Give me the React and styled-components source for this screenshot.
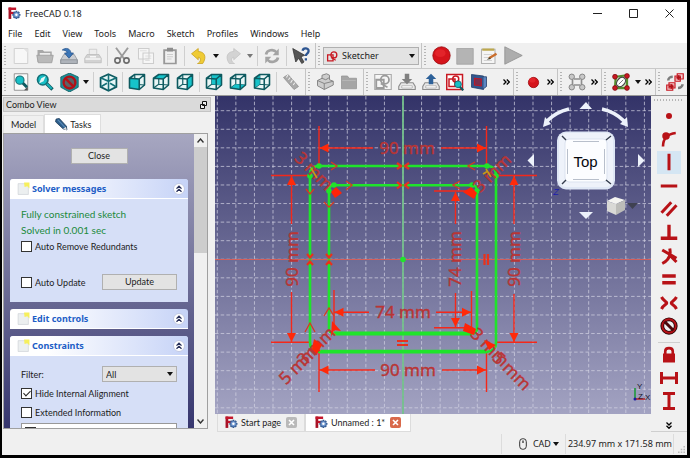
import React from "react";
import styled, { createGlobalStyle } from "styled-components";

const GRID = 18.57;
const vLines = Array.from({ length: 24 }, (_, i) => 217.3 + i * GRID);
const hLines = Array.from({ length: 17 }, (_, i) => 110.7 + i * GRID);

/* ---------- icons ---------- */

const Icon = ({ size = 18, children }) => (
  <svg width={size} height={size} viewBox="0 0 24 24" fill="none" aria-hidden="true">
    {children}
  </svg>
);

const Caret = ({ color = "#111" }) => (
  <svg width="6" height="4" viewBox="0 0 6 4" aria-hidden="true">
    <path d="M0 0h6L3 4z" fill={color} />
  </svg>
);

const Chevrons = () => (
  <svg width="7" height="6" viewBox="0 0 7 6" fill="none" aria-hidden="true">
    <path d="M0.5 0.5L3 3L0.5 5.5M3.8 0.5L6.3 3L3.8 5.5" stroke="#000" strokeWidth="1.3" />
  </svg>
);

const Logo = ({ size = 13 }) => (
  <Icon size={size}>
    <rect x="1" y="1" width="5" height="21" fill="#a81226" />
    <rect x="1" y="1" width="14" height="4.500" fill="#c3152b" />
    <rect x="5" y="9" width="7" height="4" fill="#c3152b" />
    <g stroke="#34598f" strokeWidth="3.400">
      <path d="M15.500 7v15M8 14.500h15M10.200 9.200l10.600 10.600M20.800 9.200L10.200 19.800" />
    </g>
    <circle cx="15.500" cy="14.500" r="5.400" fill="#7098d0" stroke="#34598f" />
    <circle cx="15.500" cy="14.500" r="2.300" fill="#fff" />
  </Icon>
);

const faces = {
  front: "M2 7L15 8V22L2 20Z",
  top: "M2 7L9 2H22L15 8Z",
  right: "M15 8L22 2V16L15 22Z",
  rear: "M9 2H22V16L9 15Z",
  bottom: "M2 20L9 15L22 16L15 22Z",
  left: "M2 7L9 2V15L2 20Z",
};

const CubeIcon = ({ face }) => (
  <Icon>
    <path d="M2 7L9 2H22V16L15 22L2 20Z" fill="#e9f6f6" />
    <path d="M9 2V15L2 20M9 15L22 16" stroke="#155f64" strokeWidth="1.600" />
    <path d={faces[face]} fill="#16c3ca" />
    <path d="M2 7L9 2H22V16L15 22L2 20ZM2 7L15 8V22M15 8L22 2" stroke="#0e5a60" strokeWidth="2.100" strokeLinejoin="round" />
  </Icon>
);

const IsoIcon = () => (
  <Icon size={19}>
    <path d="M12 1.500L22 6V17.500L12 22.500L2 17.500V6Z" fill="#e6f7f7" stroke="#0e5a60" strokeWidth="2.200" />
    <path d="M2 6L12 10.500L22 6M12 10.500V22M12 2V9M3 17L10 13M21 17L14 13" stroke="#137077" strokeWidth="2" />
  </Icon>
);

const NewIcon = ({ color = "#f7f7f7" }) => (
  <Icon>
    <path d="M3 2H21V22H3Z" fill={color} stroke="#d0d0d0" strokeWidth="1.300" />
    <path d="M15 2L21 8V2Z" fill="#e2e2e2" />
  </Icon>
);
const OpenIcon = () => (
  <Icon>
    <path d="M2 4H9L11 6H21V20H2Z" fill="#a8a8a8" />
    <path d="M5 8H19V15H5Z" fill="#ececec" />
    <path d="M1 11H23L21 21H3Z" fill="#b9b9b9" stroke="#999" />
  </Icon>
);
const SaveIcon = () => (
  <Icon>
    <path d="M5 10H19L23 17V22H1V17Z" fill="#c9ccd1" stroke="#8b9097" />
    <path d="M1 17H23V22H1Z" fill="#aeb3ba" stroke="#84898f" />
    <path d="M3 4C8 0 14 2 14.500 8H18L12 15L6 8H9.500C9 5 6 4 3 4Z" fill="#3b76b8" stroke="#24528a" />
  </Icon>
);
const PrintIcon = () => (
  <Icon>
    <path d="M7 3H17V11H7Z" fill="#ededed" stroke="#c6c6c6" />
    <path d="M4 10H20L23 15V21H1V15Z" fill="#d2d2d2" stroke="#bbb" />
    <path d="M2 16H22M8 13H16" stroke="#f7f7f7" strokeWidth="2" />
  </Icon>
);
const CutIcon = () => (
  <Icon>
    <path d="M4 1L15 16M20 1L9 16" stroke="#9a9a9a" strokeWidth="2.500" />
    <circle cx="6" cy="18" r="3.500" stroke="#6d6d6d" strokeWidth="2.200" />
    <circle cx="18" cy="18" r="3.500" stroke="#6d6d6d" strokeWidth="2.200" />
  </Icon>
);
const CopyIcon = () => (
  <Icon>
    <path d="M2 2H16V16H2ZM8 8H22V22H8Z" fill="#f6f6f6" stroke="#cdcdcd" strokeWidth="1.400" />
    <path d="M11 12H19M11 15H19M11 18H17M4 5H13" stroke="#d5d5d5" />
  </Icon>
);
const PasteIcon = () => (
  <Icon>
    <path d="M3 3H21V23H3Z" fill="#999" />
    <path d="M5.500 5.500H18.500V21H5.500Z" fill="#f0f0f0" />
    <path d="M8 1H16V6H8Z" fill="#8d8d8d" />
    <path d="M8 10H16M8 13H16M8 16H14" stroke="#c2c2c2" />
  </Icon>
);
const UndoIcon = ({ fill, line, flip }) => (
  <Icon>
    <g transform={flip ? "translate(24 0) scale(-1 1)" : undefined}>
      <path d="M2 9L11 2V6C19 6 23 13 17 22H10C15 20 15 14 11 13.500V17Z" fill={fill} stroke={line} />
    </g>
  </Icon>
);
const RefreshIcon = () => (
  <Icon>
    <path d="M4 10C5 4 14 2 18 7M20 14C19 20 10 22 6 17" stroke="#a4a4a4" strokeWidth="3.600" />
    <path d="M21 2V11H13ZM3 22V13H11Z" fill="#a4a4a4" />
  </Icon>
);
const HelpIcon = () => (
  <Icon>
    <path d="M1 2L5 20L9 15L13 22L16 20L12 13L17 11Z" fill="#555" stroke="#333" />
    <path d="M14 5C15 0 23 1 22 6C21.500 9 18.500 9 18.500 12M18.500 15V18" stroke="#2d5591" strokeWidth="3" />
  </Icon>
);
const SketchIcon = ({ color = "#c81822", size = 18, bg }) => (
  <Icon size={size}>
    {bg && <path d="M1 2H23V22H1Z" fill="#f6f6f6" stroke="#aaa" strokeWidth="1.500" />}
    <path d="M3 9H13V20H3Z" stroke={color} strokeWidth="2.400" />
    <circle cx="14.500" cy="9" r="5.500" stroke={color} strokeWidth="2.400" />
    <path d="M9 14L18 19" stroke={color} strokeWidth="2" />
  </Icon>
);
const RecordIcon = ({ r = 11, size = 19 }) => (
  <Icon size={size}>
    <circle cx="12" cy="12" r={r} fill="#d5141b" stroke="#9b0c10" />
    <ellipse cx="10.500" cy="9" rx={r * 0.6} ry={r * 0.45} fill="#e3242a" />
  </Icon>
);
const StopIcon = () => (
  <Icon>
    <path d="M1 2H23V23H1Z" fill="#b4b4b4" stroke="#9f9f9f" />
  </Icon>
);
const MacroEditIcon = () => (
  <Icon>
    <path d="M2 3H20V22H2Z" fill="#f5f5f5" stroke="#b1b1b1" strokeWidth="1.400" />
    <path d="M3 2H19V5H3Z" fill="#bda84e" />
    <path d="M5 10H16M5 14H12M5 18H16" stroke="#c5c5c5" />
    <path d="M22 9L12 15" stroke="#c96e2d" strokeWidth="3.200" />
    <path d="M13 13.500L9 17L14.500 16Z" fill="#443" />
  </Icon>
);
const PlayIcon = () => (
  <Icon size={19}>
    <path d="M1 1L23 12L1 23Z" fill="#adadad" stroke="#8e8e8e" />
  </Icon>
);
const FitIcon = () => (
  <Icon>
    <path d="M3 1H21V23H3Z" fill="#fafafa" stroke="#777" />
    <path d="M16 23L21 18V23Z" fill="#555" />
    <path d="M14 13L20 19" stroke="#0e5a60" strokeWidth="4" />
    <circle cx="10.500" cy="9.500" r="5.500" fill="#16bfc6" stroke="#137077" strokeWidth="1.500" />
  </Icon>
);
const ZoomIcon = () => (
  <Icon>
    <path d="M14 14L22 22" stroke="#0e5a60" strokeWidth="4.500" />
    <path d="M14 14L21 21" stroke="#16b0b8" strokeWidth="2.500" />
    <circle cx="9" cy="9" r="7" fill="#17bec5" stroke="#137077" strokeWidth="2.200" />
    <path d="M13 4L10 11L4 14L7 7Z" fill="#e3f7f7" />
  </Icon>
);
const DrawStyleIcon = () => (
  <Icon size={19}>
    <path d="M12 0L23 5V18L12 24L1 18V5Z" fill="#1a9098" stroke="#0e5a60" />
    <circle cx="12" cy="12" r="7.500" fill="#5a6468" stroke="#b01218" strokeWidth="3" />
    <path d="M6.500 6.500L17.500 17.500" stroke="#b01218" strokeWidth="3" />
  </Icon>
);
const RulerIcon = () => (
  <Icon>
    <path d="M2 6L8 2L22 18L16 22Z" fill="#a9a9a9" stroke="#8d8d8d" />
    <path d="M8 2L6 6M11 6L8.500 9M14 9L11.500 13M17 13L15 16" stroke="#f0f0f0" strokeWidth="1.400" />
  </Icon>
);
const PartIcon = () => (
  <Icon>
    <path d="M2 10L8 7V3L14 1L18 3V9L23 11V16L11 22L2 17Z" fill="#cdcdcd" stroke="#858585" strokeWidth="1.300" />
    <path d="M2 10L11 14L23 11M11 14V22M8 7L13 9L18 6" stroke="#858585" strokeWidth="1.300" />
  </Icon>
);
const FolderIcon = () => (
  <Icon>
    <path d="M2 4H10L12 7H22V21H2Z" fill="#a5a5a5" stroke="#939393" />
    <path d="M3 10H21" stroke="#bbb" />
  </Icon>
);
const TrayIcon = ({ color, up }) => (
  <Icon>
    <path d="M4 13H20L23 18V22H1V18Z" fill="#e9e9e9" stroke="#8d8d8d" strokeWidth="1.500" />
    <path d="M5 17H19V20H5Z" fill="#fff" stroke="#aaa" />
    {up ? <path d="M12 1L19 8H15V15H9V8H5Z" fill={color} /> : <path d="M12 15L5 8H9V1H15V8H19Z" fill={color} />}
  </Icon>
);
const ViewSketchIcon = () => (
  <Icon>
    <path d="M1 2H22V22H1Z" fill="#fff" stroke="#c81822" strokeWidth="2" />
    <path d="M4 8H12V18H4Z" stroke="#c81822" strokeWidth="2" />
    <circle cx="13" cy="8" r="4" stroke="#c81822" strokeWidth="2" />
    <path d="M18 18L23 23" stroke="#0e5a60" strokeWidth="3" />
    <circle cx="16" cy="15" r="4.500" fill="#17bec5" stroke="#0e5a60" />
  </Icon>
);
const SectionIcon = () => (
  <Icon>
    <path d="M2 2L18 4V22L2 19Z" fill="#31578f" stroke="#1c3763" />
    <path d="M18 5H22V18L18 21" fill="#5c86c2" stroke="#1c3763" />
    <path d="M6 7L15 8V17L6 16Z" fill="#7c2e4d" stroke="#b81a2a" strokeWidth="1.600" />
  </Icon>
);
const ArrayIcon = () => (
  <Icon>
    <path d="M6 6V18M18 6V18M8 8H16M8 16H16" stroke="#8e8e8e" strokeWidth="2.200" />
    {[[5, 5], [19, 5], [5, 19], [19, 19]].map(([x, y]) => (
      <circle key={`${x}-${y}`} cx={x} cy={y} r="3.600" fill="#c8c8c8" stroke="#858585" strokeWidth="1.300" />
    ))}
  </Icon>
);
const BsplineIcon = () => (
  <Icon>
    <path d="M5 5L20 3L20 20L4 20Z" fill="#cfe7bd" stroke="#568f2f" strokeWidth="3" />
    <ellipse cx="12" cy="12" rx="5" ry="7" transform="rotate(40 12 12)" fill="#fff" stroke="#444" strokeWidth="1.600" />
    <path d="M9 15L15 9" stroke="#555" />
    {[[4, 5], [20, 4], [20, 20], [4, 20]].map(([x, y]) => (
      <circle key={`${x}-${y}`} cx={x} cy={y} r="3.200" fill="#c81822" stroke="#7d0d12" />
    ))}
  </Icon>
);
const VirtualSpaceIcon = () => (
  <Icon>
    <path d="M3 10C3 7 6 5 9 5M22 15C22 18 19 20 16 20" stroke="#7c7c7c" strokeWidth="3.500" />
    <path d="M12 4H19V11H12ZM15 1H23V8H15ZM1 16H9V23H1ZM4 13H12V20H4Z" fill="#f2cccf" stroke="#c81822" strokeWidth="1.600" />
    <path d="M14 6H20M17 3V9M4 18H10M7 15V21" stroke="#b01218" strokeWidth="2" />
  </Icon>
);
const PencilIcon = () => (
  <Icon size={13}>
    <path d="M2 2L8 1L21 15L22 22L15 20L1 7Z" fill="#2d5e8b" stroke="#1b3a58" strokeWidth="1.500" />
    <path d="M20 16L22 23L15 20Z" fill="#ddd" />
    <path d="M5 3L18 17" stroke="#5c8db9" strokeWidth="2" />
  </Icon>
);
const NoteIcon = () => (
  <Icon size={13}>
    <path d="M2 3H21V23H2Z" fill="#eceff0" stroke="#c3c8cf" />
    <path d="M13 1H23V12L19 8L14 9Z" fill="#f6ef5c" />
  </Icon>
);
const CollapseIcon = () => (
  <svg width="12" height="12" viewBox="0 0 12 12" fill="none" aria-hidden="true">
    <circle cx="6" cy="6" r="5.500" fill="#fff" stroke="#c0c8e4" />
    <path d="M3.500 5.600L6 3.200L8.500 5.600M3.500 8.800L6 6.400L8.500 8.800" stroke="#242c58" strokeWidth="1.300" />
  </svg>
);

const red = "#b81217";
const constraints = [
  { name: "Constrain coincident", draw: <circle cx="12" cy="12" r="4" fill={red} /> },
  {
    name: "Constrain point onto object",
    draw: (
      <>
        <path d="M4 22C4 12 10 5 21 4" stroke={red} strokeWidth="3.500" />
        <circle cx="8" cy="8" r="5" fill={red} />
      </>
    ),
  },
  { name: "Constrain vertically", active: true, draw: <path d="M12 1V23" stroke={red} strokeWidth="4" /> },
  { name: "Constrain horizontally", draw: <path d="M1 12H23" stroke={red} strokeWidth="4" /> },
  { name: "Constrain parallel", draw: <path d="M2 17L15 3M9 21L22 7" stroke={red} strokeWidth="4" /> },
  { name: "Constrain perpendicular", draw: <path d="M12 1V19M1 19H23" stroke={red} strokeWidth="4.500" /> },
  {
    name: "Constrain tangent",
    draw: <path d="M3 4L22 15M13 2C15 11 11 18 3 22M12 10L22 20" stroke={red} strokeWidth="4" />,
  },
  { name: "Constrain equal", draw: <path d="M3 8H21M3 17H21" stroke={red} strokeWidth="4.500" /> },
  {
    name: "Constrain symmetric",
    draw: <path d="M2 4C5 10 9 10 9 12S5 14 2 20M22 4C19 10 15 10 15 12S19 14 22 20" stroke={red} strokeWidth="4" />,
  },
  {
    name: "Block",
    draw: (
      <>
        <circle cx="12" cy="12" r="9" stroke="#250607" strokeWidth="5" />
        <circle cx="12" cy="12" r="9" stroke={red} strokeWidth="2.500" />
        <path d="M6 6L18 18" stroke="#4b090b" strokeWidth="4" />
      </>
    ),
  },
  {
    name: "Constrain lock",
    split: true,
    draw: (
      <>
        <path d="M7 11V7C7 1.500 17 1.500 17 7V11" stroke={red} strokeWidth="3.500" />
        <path d="M4 10H20V22H4Z" fill={red} />
      </>
    ),
  },
  { name: "Constrain horizontal distance", draw: <path d="M2 4V20M22 4V20M2 12H22" stroke={red} strokeWidth="4" /> },
  { name: "Constrain vertical distance", draw: <path d="M4 2H20M4 22H20M12 2V22" stroke={red} strokeWidth="4" /> },
];

/* ---------- 3D view ---------- */

const Arrow = ({ x, y, dir }) => {
  const turn = { right: 0, down: 90, left: 180, up: 270 }[dir];
  return <path d="M0 0L-9 -4.500V4.500Z" fill="#ff2a0a" transform={`translate(${x} ${y}) rotate(${turn})`} />;
};

const Label = ({ x, y, angle = 0, children }) => (
  <text
    x={x}
    y={y + 6}
    transform={`rotate(${angle} ${x} ${y})`}
    textAnchor="middle"
    fontFamily="Noto Sans, sans-serif"
    fontSize="17"
    fill="#b93535"
    stroke="#b93535"
    strokeWidth="0.400"
  >
    {children}
  </text>
);

const SketchView = () => (
  <View viewBox="215 96 436 318" preserveAspectRatio="xMidYMid slice" role="img" aria-label="Sketch, top view">
    <defs>
      <linearGradient id="sky" x1="0" y1="0" x2="0" y2="1">
        <stop offset="0" stopColor="#333368" />
        <stop offset="1" stopColor="#a3a3c2" />
      </linearGradient>
    </defs>
    <rect x="215" y="96" width="436" height="318" fill="url(#sky)" />
    <g stroke="#d4d4e4" strokeOpacity="0.700" strokeDasharray="3.500 2.200">
      {vLines.map((x) => <path key={x} d={`M${x} 96V414`} />)}
      {hLines.map((y) => <path key={y} d={`M215 ${y}H651`} />)}
    </g>
    <path d="M215 259.500H651" stroke="#d4605c" strokeWidth="1.200" />
    <path d="M403 96V414" stroke="#74c08c" strokeWidth="1.800" />

    <g stroke="#f4281a" strokeWidth="1.400">
      <path d="M319 126V166M486.500 126V166M319 148H373M441 148H486" />
      <path d="M319 351V392M486.500 351V392M319 370H375M442 370H486" />
      <path d="M271 175.500H311M271 342.300H311M291.500 176V224M291.500 292V342" />
      <path d="M497 175.500H537M497 342.300H537M514 176V224M514 294V342" />
      <path d="M434 191H475M434 327.700H471M455.500 192V224M455.500 293V327" />
      <path d="M334 290V331M471.500 291V331M334 312.300H369M436 312.300H471" />
    </g>
    <Arrow x={319.500} y={148} dir="left" />
    <Arrow x={486} y={148} dir="right" />
    <Arrow x={319.500} y={370} dir="left" />
    <Arrow x={486} y={370} dir="right" />
    <Arrow x={291.500} y={176} dir="up" />
    <Arrow x={291.500} y={342} dir="down" />
    <Arrow x={514} y={176} dir="up" />
    <Arrow x={514} y={342} dir="down" />
    <Arrow x={455.500} y={192} dir="up" />
    <Arrow x={455.500} y={327} dir="down" />
    <Arrow x={334.500} y={312.300} dir="left" />
    <Arrow x={471} y={312.300} dir="right" />

    <Label x={407} y={148}>90 mm</Label>
    <Label x={408} y={370}>90 mm</Label>
    <Label x={403} y={312}>74 mm</Label>
    <Label x={292} y={259} angle={-90}>90 mm</Label>
    <Label x={514} y={259} angle={-90}>90 mm</Label>
    <Label x={455} y={259} angle={-90}>74 mm</Label>

    <g stroke="#1fe42b" strokeWidth="2.600">
      <path d="M319 166H487Q496 166 496 175.500V342.500Q496 351.700 487 351.700H319Q310 351.700 310 342.500V175.500Q310 166 319 166Z" />
      <path d="M334 185.300H472Q477 185.300 477 191V328Q477 333.500 472 333.500H334Q329 333.500 329 328V191Q329 185.300 334 185.300Z" />
      <path d="M319 351.700H487M334 333.500H472" strokeWidth="3.800" />
    </g>
    <g fill="#1fe42b">
      {[[319, 166], [310, 176], [487, 166], [496, 176], [334, 185], [329, 191], [472, 185], [477, 191], [403, 259.500]].map(
        ([x, y]) => <circle key={`${x}-${y}`} cx={x} cy={y} r="2.800" />
      )}
    </g>

    <Label x={314} y={171} angle={45}>3 mm</Label>
    <Label x={492} y={173} angle={-45}>3 mm</Label>
    <Label x={298} y={365} angle={-45}>5 mm</Label>
    <Label x={316} y={346} angle={-45}>3 mm</Label>
    <Label x={490} y={347} angle={45}>3 mm</Label>
    <Label x={512} y={371} angle={45}>5 mm</Label>
    <g fill="#ff2408">
      <path d="M331 192L336 187L342 193L335 198Z" />
      <path d="M463 192L471 187L477 193L474 199Z" />
      <path d="M332 321L341 331L334 330L331 337Z" />
      <path d="M465 323L476 329L474 335L463 331Z" />
      <path d="M314 339L322 345L317 354L312 349Z" />
      <path d="M484 340L496 345L489 350Z" />
    </g>
    <g stroke="#e8321c" strokeWidth="2.200">
      <path d="M397 163L401 166L397 169M409 163L405 166L409 169M397 182L401 185.300L397 188.500M409 182L405 185.300L409 188.500" />
      <path d="M307 254L310 257.500L313 254M307 265L310 261.500L313 265M326 254L329 257.500L332 254M326 265L329 261.500L332 265" />
      <path d="M397 341H408M397 345H408M484.500 254V265M488 254V265" />
    </g>
    <g stroke="#d83a20" strokeWidth="1.300">
      <path d="M331 162L337 166L331 170M346 181L352 185L346 190M475 162L468 166L475 170M460 181L453 185L460 189" />
      <path d="M306 189L310 194L314 189M324 202L329 207L334 202M305 332L310 323L315 332M324 316L329 308L334 316" />
    </g>
    <g stroke="#c99a16" strokeWidth="1.600">
      <path d="M311 168L317 178M486 169L491 177M483 174L488 171" />
    </g>

    {/* navigation cube */}
    <g fill="#edf2fb">
      <path d="M586 102L592 109H579.500Z" />
      <path d="M586 219L579 212H593Z" />
      <path d="M527.500 160.500L534 154V167Z" />
      <path d="M644.500 160.500L638 154V167Z" />
      <path d="M543 127L545 117L551 124Z" />
      <path d="M628 127L627 117L620 124Z" />
    </g>
    <path d="M547 121Q556 112 569 109M624 121Q615 112 602 109" stroke="#edf2fb" strokeWidth="3.600" />
    <rect x="557" y="131.500" width="58" height="58" rx="9" fill="#dfe7f5" />
    <rect x="559" y="133" width="54" height="54" rx="7" fill="#eef2fa" />
    <rect x="565" y="139" width="42" height="43" rx="4" fill="#fcfdff" stroke="#dbe2ef" />
    <path d="M562 136L566 140M611 136L606 140M562 184L566 180M611 184L606 180" stroke="#333b4b" strokeWidth="1.400" />
    <path d="M573 141.500H599M573 179.500H599M567.500 149V174M604.500 149V174" stroke="#b8bfcb" />
    <text x="585.500" y="167" textAnchor="middle" fontFamily="Liberation Sans, sans-serif" fontSize="15" fill="#05080d">Top</text>
    <text x="556" y="195" textAnchor="middle" fontFamily="Liberation Sans, sans-serif" fontSize="9" fontStyle="italic" fill="#1b1cae">Z</text>
    <path d="M607 201L615 197L625 200L616 204Z" fill="#f4f4f1" />
    <path d="M607 201L616 204V215L607 211Z" fill="#d9d9d6" />
    <path d="M616 204L625 200V210L616 215Z" fill="#bcbcb9" />
    <path d="M627 203H638L632.500 209Z" fill="#3f4152" />

    {/* axis cross */}
    <path d="M635 399V388" stroke="#1d9a3b" strokeWidth="1.600" />
    <path d="M636 399H645" stroke="#b5242c" strokeWidth="1.600" />
    <circle cx="635" cy="399" r="1.500" fill="#1b1b9c" />
    <g fontFamily="Liberation Sans, sans-serif" fontSize="8" fill="#15152a">
      <text x="637" y="389">Y</text>
      <text x="638" y="399">Z</text>
      <text x="645" y="400">X</text>
    </g>
  </View>
);

/* ---------- app ---------- */

const Tool = ({ name, children }) => (
  <ToolButton aria-label={name} title={name}>{children}</ToolButton>
);

const TaskBox = ({ title, children }) => (
  <Box>
    <BoxHeader>
      <NoteIcon />
      <h2>{title}</h2>
      <button aria-label={`Collapse ${title}`}><CollapseIcon /></button>
    </BoxHeader>
    {children && <BoxBody>{children}</BoxBody>}
  </Box>
);

const App = () => (
  <Frame>
    <GlobalStyle />
    <TitleBar>
      <Logo />
      <h1>FreeCAD 0.18</h1>
      <button aria-label="Minimize">
        <svg width="9" height="9" viewBox="0 0 9 9"><path d="M0 4.500H9" stroke="#222" /></svg>
      </button>
      <button aria-label="Maximize">
        <svg width="9" height="9" viewBox="0 0 9 9"><path d="M0.500 0.500H8.500V8.500H0.500Z" fill="none" stroke="#222" /></svg>
      </button>
      <button aria-label="Close window">
        <svg width="9" height="9" viewBox="0 0 9 9"><path d="M0.500 0.500L8.500 8.500M8.500 0.500L0.500 8.500" stroke="#222" /></svg>
      </button>
    </TitleBar>
    <MenuBar>
      {["File", "Edit", "View", "Tools", "Macro", "Sketch", "Profiles", "Windows", "Help"].map((item) => (
        <button key={item}>{item}</button>
      ))}
    </MenuBar>

    <ToolRow>
      <Group>
        <Tool name="New"><NewIcon /></Tool>
        <Tool name="Open"><OpenIcon /></Tool>
        <Tool name="Save"><SaveIcon /></Tool>
        <Tool name="Print"><PrintIcon /></Tool>
        <Separator />
        <Tool name="Cut"><CutIcon /></Tool>
        <Tool name="Copy"><CopyIcon /></Tool>
        <Tool name="Paste"><PasteIcon /></Tool>
        <Separator />
        <Tool name="Undo"><UndoIcon fill="#efcb35" line="#c79f1b" /></Tool>
        <SmallButton aria-label="Undo list"><Caret /></SmallButton>
        <Tool name="Redo"><UndoIcon fill="#d3d3d3" line="#c2c2c2" flip /></Tool>
        <SmallButton aria-label="Redo list"><Caret color="#777" /></SmallButton>
        <Separator />
        <Tool name="Refresh"><RefreshIcon /></Tool>
        <Separator />
        <Tool name="What's this?"><HelpIcon /></Tool>
      </Group>
      <Group>
        <Workbench>
          <SketchIcon size={13} />
          <select aria-label="Workbench" defaultValue="Sketcher">
            <option>Sketcher</option>
          </select>
          <Caret />
        </Workbench>
      </Group>
      <Group $last>
        <Tool name="Record macro"><RecordIcon /></Tool>
        <Tool name="Stop macro"><StopIcon /></Tool>
        <Tool name="Macros"><MacroEditIcon /></Tool>
        <Tool name="Execute macro"><PlayIcon /></Tool>
      </Group>
    </ToolRow>
    <ToolRow>
      <Group>
        <Tool name="Fit all"><FitIcon /></Tool>
        <Tool name="Fit selection"><ZoomIcon /></Tool>
        <Tool name="Draw style"><DrawStyleIcon /></Tool>
        <SmallButton aria-label="Draw styles"><Caret /></SmallButton>
        <Separator />
        <Tool name="Isometric"><IsoIcon /></Tool>
        <Separator />
        <Tool name="Front"><CubeIcon face="front" /></Tool>
        <Tool name="Top"><CubeIcon face="top" /></Tool>
        <Tool name="Right"><CubeIcon face="right" /></Tool>
        <Separator />
        <Tool name="Rear"><CubeIcon face="rear" /></Tool>
        <Tool name="Bottom"><CubeIcon face="bottom" /></Tool>
        <Tool name="Left"><CubeIcon face="left" /></Tool>
        <Separator />
        <Tool name="Measure distance"><RulerIcon /></Tool>
      </Group>
      <Group>
        <Tool name="Create part"><PartIcon /></Tool>
        <Tool name="Create group"><FolderIcon /></Tool>
      </Group>
      <Group $grow>
        <Tool name="New sketch"><SketchIcon color="#9b9b9b" bg /></Tool>
        <Tool name="Edit sketch"><TrayIcon color="#808080" /></Tool>
        <Tool name="Leave sketch"><TrayIcon color="#2d6199" up /></Tool>
        <Tool name="View sketch"><ViewSketchIcon /></Tool>
        <Tool name="View section"><SectionIcon /></Tool>
        <SmallButton $end aria-label="More sketch tools"><Chevrons /></SmallButton>
      </Group>
      <Group>
        <Tool name="Point"><RecordIcon r={6.500} /></Tool>
        <SmallButton aria-label="More geometries"><Chevrons /></SmallButton>
      </Group>
      <Group>
        <Tool name="Close shape"><ArrayIcon /></Tool>
        <SmallButton aria-label="More sketcher tools"><Chevrons /></SmallButton>
      </Group>
      <Group>
        <Tool name="B-spline information"><BsplineIcon /></Tool>
        <SmallButton aria-label="B-spline list"><Caret /></SmallButton>
        <SmallButton aria-label="More B-spline tools"><Chevrons /></SmallButton>
      </Group>
      <Group $last>
        <Tool name="Switch virtual space"><VirtualSpaceIcon /></Tool>
      </Group>
    </ToolRow>

    <Main>
      <Dock>
        <DockTitle>
          Combo View
          <button aria-label="Float panel">
            <svg width="7" height="8" viewBox="0 0 7 8"><path d="M2.500 0.500H6.500V4.500H2.500ZM0.500 3.500H4.500V7.500H0.500Z" fill="#eee" stroke="#111" /></svg>
          </button>
        </DockTitle>
        <DockTabs>
          <DockTab>Model</DockTab>
          <DockTab $active><PencilIcon />Tasks</DockTab>
        </DockTabs>
        <Scroller>
          <Tasks>
            <PushButton $close>Close</PushButton>
            <TaskBox title="Solver messages">
              <Message>Fully constrained sketch</Message>
              <Message>Solved in 0.001 sec</Message>
              <Check><input type="checkbox" />Auto Remove Redundants</Check>
              <Row $apart>
                <Check><input type="checkbox" />Auto Update</Check>
                <PushButton>Update</PushButton>
              </Row>
            </TaskBox>
            <TaskBox title="Edit controls" />
            <TaskBox title="Constraints">
              <Filters>
                <Row>
                  <label htmlFor="filter">Filter:</label>
                  <Picker>
                    <select id="filter" defaultValue="All">
                      <option>All</option>
                    </select>
                    <Caret />
                  </Picker>
                </Row>
                <Check><input type="checkbox" defaultChecked />Hide Internal Alignment</Check>
                <Check><input type="checkbox" />Extended Information</Check>
                <List>
                  <Check><input type="checkbox" defaultChecked />1 - Constraint1</Check>
                </List>
              </Filters>
            </TaskBox>
          </Tasks>
          <ScrollBar>
            <button aria-label="Scroll up">
              <svg width="7" height="5" viewBox="0 0 7 5"><path d="M0.500 4.500L3.500 1L6.500 4.500" fill="none" stroke="#333" strokeWidth="1.400" /></svg>
            </button>
            <Thumb />
            <button aria-label="Scroll down">
              <svg width="7" height="5" viewBox="0 0 7 5"><path d="M0.500 0.500L3.500 4L6.500 0.500" fill="none" stroke="#333" strokeWidth="1.400" /></svg>
            </button>
          </ScrollBar>
        </Scroller>
      </Dock>

      <Workspace>
        <SketchView />
        <DocTabs>
          <DocTab>
            <Logo />
            <span>Start page</span>
            <CloseTab aria-label="Close Start page">
              <svg width="7" height="7" viewBox="0 0 7 7"><path d="M1 1L6 6M6 1L1 6" stroke="#fff" strokeWidth="1.600" /></svg>
            </CloseTab>
          </DocTab>
          <DocTab $active>
            <Logo />
            <span>Unnamed : 1*</span>
            <CloseTab $active aria-label="Close Unnamed : 1">
              <svg width="7" height="7" viewBox="0 0 7 7"><path d="M1 1L6 6M6 1L1 6" stroke="#fff" strokeWidth="1.600" /></svg>
            </CloseTab>
          </DocTab>
        </DocTabs>
      </Workspace>

      <SideBar>
        {constraints.map((item) => (
          <SideButton key={item.name} aria-label={item.name} title={item.name} $active={item.active} $split={item.split}>
            <Icon>{item.draw}</Icon>
          </SideButton>
        ))}
        <MoreButton aria-label="More constraints">
          <svg width="6" height="7" viewBox="0 0 6 7" fill="none"><path d="M0.500 0.500L3 3L5.500 0.500M0.500 3.800L3 6.300L5.500 3.800" stroke="#000" strokeWidth="1.300" /></svg>
        </MoreButton>
      </SideBar>
    </Main>

    <StatusBar>
      <NavStyle>
        <svg width="8" height="12" viewBox="0 0 8 12" fill="none">
          <rect x="0.700" y="0.700" width="6.600" height="10.600" rx="3" stroke="#333" />
          <path d="M4 2.500V5" stroke="#333" strokeWidth="1.300" />
        </svg>
        <button>CAD<Caret /></button>
      </NavStyle>
      <Coordinates>234.97 mm x 171.58 mm</Coordinates>
      <Grip viewBox="0 0 9 9" aria-hidden="true">
        <path d="M7 0h2v2h-2zM7 3.500h2v2h-2zM3.500 3.500h2v2h-2zM7 7h2v2h-2zM3.500 7h2v2h-2zM0 7h2v2h-2z" fill="#bbb" />
      </Grip>
    </StatusBar>
  </Frame>
);

const GlobalStyle = createGlobalStyle`
  * {
    box-sizing: border-box;
  }
  body {
    margin: 0;
    background: #000;
    color: #1c1c1c;
    font-family: "Noto Sans", "Open Sans", sans-serif;
    font-size: 9px;
  }
  button, select, input {
    margin: 0;
    padding: 0;
    border: none;
    background: none;
    color: inherit;
    font: inherit;
  }
  h1, h2, p {
    margin: 0;
    font: inherit;
  }
  svg {
    display: block;
    flex-shrink: 0;
  }
`;

const Frame = styled.div`
  display: flex;
  flex-direction: column;
  height: 100vh;
  border: solid #000;
  border-width: 2px 3px 3px 2px;
  background: #f0f0f0;
`;
const TitleBar = styled.header`
  display: flex;
  height: 23px;
  align-items: center;
  padding-left: 6px;
  background: #fff;

  h1 {
    flex: 1;
    margin-left: 4px;
    font-size: 9px;
  }
  button {
    display: grid;
    width: 36px;
    height: 23px;
    place-items: center;
  }
`;
const MenuBar = styled.nav`
  display: flex;
  height: 18px;
  background: #fff;

  button {
    padding: 0 6px;
    line-height: 18px;
  }
`;
const ToolRow = styled.div`
  display: flex;
  height: 26px;
  border-bottom: 1px solid #c9c9c9;

  & + & {
    height: 27px;
    border-bottom-color: #999;
  }
`;
const Group = styled.div`
  display: flex;
  flex: ${(props) => (props.$grow ? 1 : "none")};
  align-items: center;
  padding-right: ${(props) => (props.$last ? 0 : "2px")};
  border-right: ${(props) => (props.$last ? "none" : "1px solid #c4c4c4")};

  &::before {
    content: "";
    width: 2px;
    height: 20px;
    margin: 0 3px 0 2px;
    background: repeating-linear-gradient(#b5b5b5 0 1px, transparent 1px 3px);
  }
`;
const ToolButton = styled.button`
  display: grid;
  width: 24px;
  height: 24px;
  place-items: center;
`;
const SmallButton = styled(ToolButton)`
  width: 10px;
  margin-left: ${(props) => (props.$end ? "auto" : 0)};
`;
const Separator = styled.div`
  width: 1px;
  height: 20px;
  margin: 0 2px;
  background: #cfcfcf;
`;
const Picker = styled.div`
  position: relative;
  width: 75px;

  select {
    width: 100%;
    height: 16px;
    padding-left: 3px;
    border: 1px solid #b0b0b0;
    background: #e3e3e3;
    appearance: none;
  }
  > svg:last-child {
    position: absolute;
    top: 6px;
    right: 4px;
    pointer-events: none;
  }
`;
const Workbench = styled(Picker)`
  width: 96px;

  select {
    height: 18px;
    padding-left: 18px;
  }
  > svg:first-child {
    position: absolute;
    top: 3px;
    left: 3px;
  }
  > svg:last-child {
    top: 7px;
  }
`;
const Main = styled.main`
  display: flex;
  flex: 1;
  min-height: 0;
`;
const Dock = styled.section`
  display: flex;
  flex-direction: column;
  width: 213px;
  padding: 1px 4px 3px 1px;
  font-family: Lato, "Noto Sans", sans-serif;
`;
const DockTitle = styled.div`
  display: flex;
  height: 15px;
  align-items: center;
  justify-content: space-between;
  padding: 0 3px 0 2px;
  border: 1px solid #c4c4c4;
  background: #dadada;
`;
const DockTabs = styled.div`
  display: flex;
  height: 21px;
  align-items: flex-end;
`;
const DockTab = styled.button`
  display: flex;
  height: ${(props) => (props.$active ? "19px" : "18px")};
  align-items: center;
  gap: 2px;
  padding: ${(props) => (props.$active ? "0 9px 0 10px" : "0 7px")};
  border: 1px solid #dedede;
  border-bottom: none;
  background: ${(props) => (props.$active ? "#fff" : "#f0f0f0")};
`;
const Scroller = styled.div`
  display: flex;
  flex: 1;
  min-height: 0;
  margin-right: 3px;
  border: 1px solid #a0a0a0;
  overflow: hidden;
`;
const Tasks = styled.div`
  display: flex;
  flex: 1;
  flex-direction: column;
  gap: 7px;
  padding: 14px 6px 0;
  background: linear-gradient(#a7a7c1, #36366e);
  overflow: hidden;
`;
const PushButton = styled.button`
  width: ${(props) => (props.$close ? "57px" : "75px")};
  height: 16px;
  flex-shrink: 0;
  align-self: center;
  margin-bottom: ${(props) => (props.$close ? "8px" : 0)};
  border: 1px solid #b0b0b0;
  background: #e3e3e3;
  line-height: 14px;
`;
const Box = styled.section`
  flex-shrink: 0;
  border-radius: 3px 3px 0 0;
  background: #d6dff7;
  overflow: hidden;
`;
const BoxHeader = styled.header`
  display: flex;
  height: 20px;
  align-items: center;
  padding: 0 3px 0 7px;
  background: linear-gradient(90deg, #fff 20%, #c6d3f7);
  border-bottom: 1px solid #fff;

  h2 {
    flex: 1;
    margin-left: 2px;
    color: #215dc6;
    font-family: "Noto Sans", sans-serif;
    font-weight: bold;
  }
`;
const BoxBody = styled.div`
  padding: 7px 11px 12px;
`;
const Message = styled.p`
  color: #1b8a3c;
  font-size: 10px;
  line-height: 16px;
`;
const Check = styled.label`
  display: flex;
  height: 16px;
  align-items: center;
  gap: 3px;

  input {
    display: grid;
    width: 11px;
    height: 11px;
    place-items: center;
    border: 1px solid #333;
    background: #fff;
    appearance: none;
  }
  input:checked::after {
    content: "";
    width: 3px;
    height: 6px;
    margin-bottom: 2px;
    border: solid #222;
    border-width: 0 1px 1px 0;
    transform: rotate(45deg);
  }
`;
const Row = styled.div`
  display: flex;
  align-items: center;
  justify-content: space-between;
  margin-top: ${(props) => (props.$apart ? "20px" : 0)};
`;
const Filters = styled.div`
  display: flex;
  flex-direction: column;
  gap: 3px;
  padding-top: 3px;
`;
const List = styled.div`
  height: 80px;
  padding: 0 3px;
  border: 1px solid #999;
  background: #fff;
`;
const ScrollBar = styled.div`
  display: flex;
  width: 13px;
  flex-direction: column;
  background: #f0f0f0;

  button {
    display: grid;
    height: 13px;
    place-items: center;
  }
  button:last-child {
    margin-top: auto;
  }
`;
const Thumb = styled.div`
  height: 36%;
  background: #cdcdcd;
`;
const Workspace = styled.section`
  display: flex;
  flex: 1;
  flex-direction: column;
  min-width: 0;
`;
const View = styled.svg`
  flex: 1;
  width: 100%;
  min-height: 0;
  fill: none;
`;
const DocTabs = styled.div`
  display: flex;
  height: 18px;
  padding-left: 2px;
  font-family: Lato, "Noto Sans", sans-serif;
`;
const DocTab = styled.div`
  display: flex;
  align-items: center;
  gap: 3px;
  padding: ${(props) => (props.$active ? "0 9px" : "0 7px")};
  border: 1px solid #dcdcdc;
  border-top: none;
  background: ${(props) => (props.$active ? "#fff" : "#f0f0f0")};
`;
const CloseTab = styled.button`
  display: grid;
  width: 11px;
  height: 11px;
  margin-left: 2px;
  place-items: center;
  border-radius: 2px;
  background: ${(props) => (props.$active ? "#d9694b" : "#b9b9b9")};
`;
const SideBar = styled.aside`
  display: flex;
  width: 36px;
  flex-direction: column;
  align-items: center;
  border-bottom: 1px solid #cfcfcf;

  &::before {
    content: "";
    width: 30px;
    height: 2px;
    margin: 3px 0;
    background: repeating-linear-gradient(90deg, #b5b5b5 0 1px, transparent 1px 3px);
  }
`;
const SideButton = styled.button`
  display: grid;
  width: 24px;
  flex: 1;
  place-items: center;
  background: ${(props) => (props.$active ? "#d5e6f3" : "none")};
  margin-top: ${(props) => (props.$split ? "5px" : 0)};
  box-shadow: ${(props) => (props.$split ? "0 -2px 0 -1px #cfcfcf" : "none")};
`;
const MoreButton = styled.button`
  display: grid;
  height: 18px;
  align-items: end;
  padding-bottom: 2px;
`;
const StatusBar = styled.footer`
  display: flex;
  height: 23px;
  align-items: center;
  justify-content: flex-end;
`;
const NavStyle = styled.div`
  display: flex;
  width: 64px;
  height: 20px;
  align-items: center;
  justify-content: flex-end;
  gap: 6px;
  padding-right: 6px;
  border-left: 1px solid #dcdcdc;

  button {
    display: flex;
    align-items: center;
    gap: 2px;
  }
`;
const Coordinates = styled.output`
  padding: 0 1px 0 2px;
  border: solid #dcdcdc;
  border-width: 0 1px;
  line-height: 20px;
`;
const Grip = styled.svg`
  width: 7px;
  height: 7px;
  align-self: flex-end;
  margin: 0 2px 2px 4px;
`;

export default App;
